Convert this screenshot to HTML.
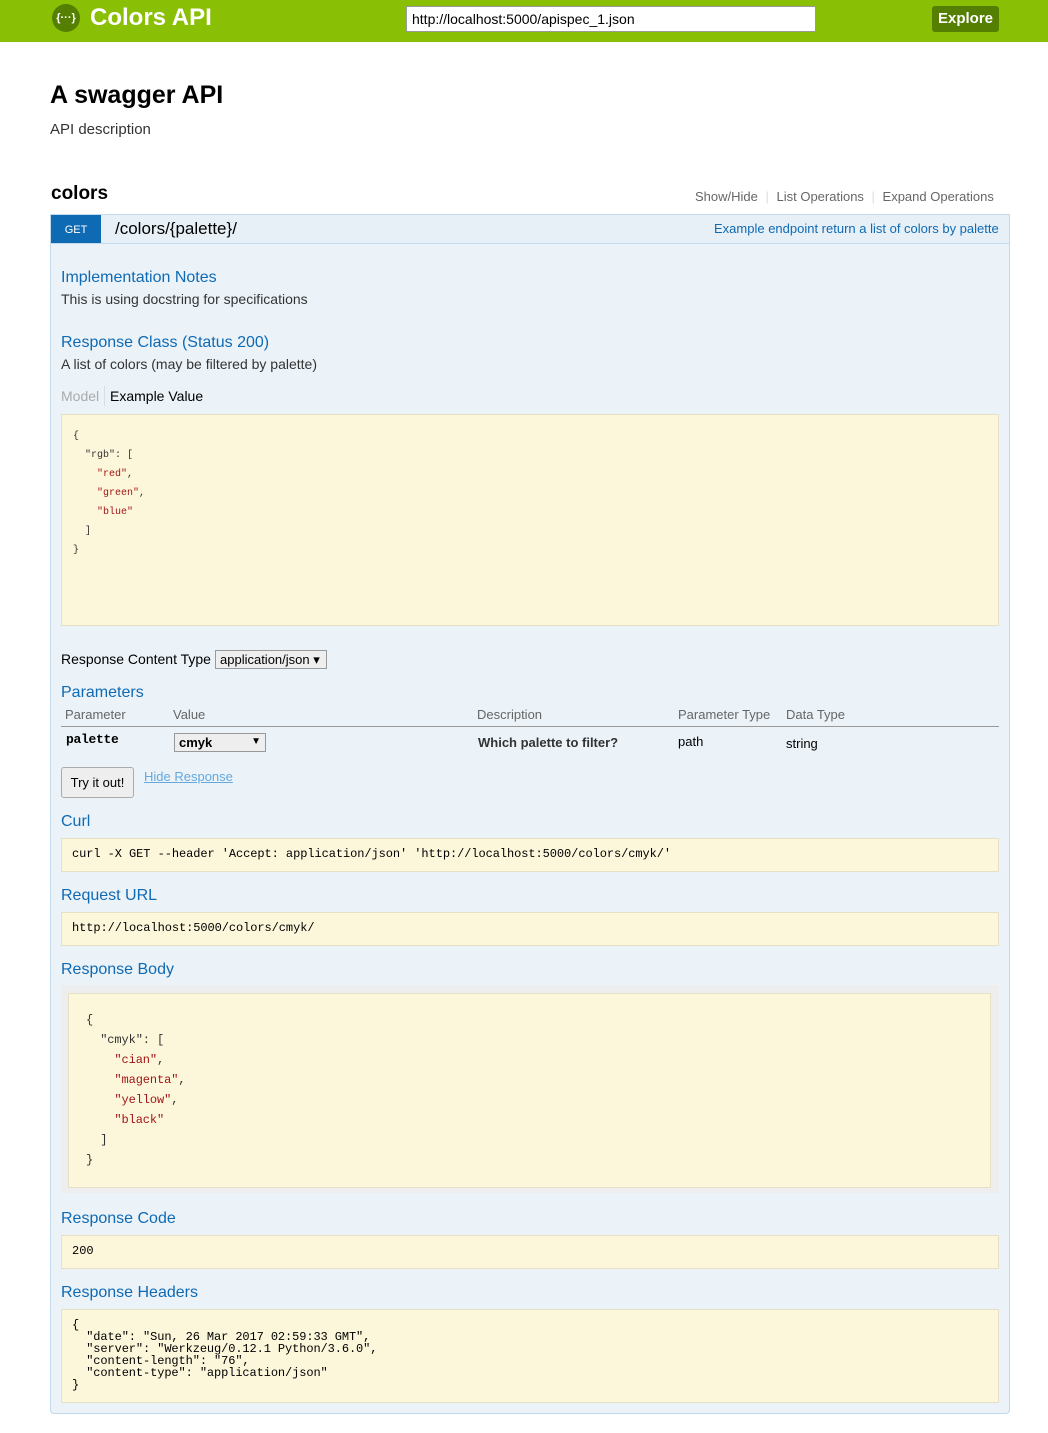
<!DOCTYPE html>
<html><head><meta charset="utf-8"><style>
*{margin:0;padding:0;box-sizing:border-box}
body{width:1048px;height:1433px;background:#fff;font-family:"Liberation Sans",sans-serif;position:relative;overflow:hidden;color:#000}
.a{position:absolute;white-space:nowrap}
.h{color:#0f6ab4;font-size:16px}
.t{font-size:14px;color:#333}
.box{position:absolute;background:#fcf6db;border:1px solid #e5e0c6}
.mono{font-family:"Liberation Mono",monospace}
.s{color:#a31515}
</style></head><body>
<div class="a" style="left:0;top:0;width:1048px;height:42px;background:#89bf04"></div>
<div class="a" style="left:52px;top:4px;width:28px;height:28px;border-radius:50%;background:#547f00;color:#fff;font-size:11px;text-align:center;line-height:28px;font-weight:bold">{···}</div>
<div class="a" style="left:90px;top:4px;font-size:24px;font-weight:bold;color:#fff">Colors API</div>
<div class="a" style="left:406px;top:6px;width:410px;height:26px;background:#fff;border:1px solid #999;font-size:14px;padding:4px 5px">http://localhost:5000/apispec_1.json</div>
<div class="a" style="left:932px;top:6px;width:67px;height:26px;background:#547f00;color:#fff;font-weight:bold;font-size:15px;text-align:center;line-height:26px;border-radius:3px">Explore</div>

<div class="a" style="left:50px;top:81px;font-size:25px;font-weight:bold">A swagger API</div>
<div class="a" style="left:50px;top:121px;font-size:15px;color:#333">API description</div>

<div class="a" style="left:51px;top:183px;font-size:19px;font-weight:bold">colors</div>
<div class="a" style="left:695px;top:189px;font-size:13px;color:#666">Show/Hide <span style="color:#ddd;margin:0 4px">|</span> List Operations <span style="color:#ddd;margin:0 4px">|</span> Expand Operations</div>

<div class="a" style="left:50px;top:214px;width:960px;height:1200px;border:1px solid #c3d9ec;background:#ebf3f9;border-radius:0 0 4px 4px"></div>
<div class="a" style="left:51px;top:215px;width:958px;height:29px;background:#e7f0f7;border-bottom:1px solid #c3d9ec"></div>
<div class="a" style="left:51px;top:215px;width:50px;height:28px;background:#0f6ab4;color:#fff;font-size:11px;text-align:center;line-height:30px">GET</div>
<div class="a" style="left:115px;top:219px;font-size:17px;color:#000">/colors/{palette}/</div>
<div class="a" style="left:714px;top:221px;font-size:13px;color:#0f6ab4">Example endpoint return a list of colors by palette</div>

<div class="a h" style="left:61px;top:269px">Implementation Notes</div>
<div class="a t" style="left:61px;top:291px">This is using docstring for specifications</div>
<div class="a h" style="left:61px;top:334px">Response Class (Status 200)</div>
<div class="a t" style="left:61px;top:356px">A list of colors (may be filtered by palette)</div>
<div class="a" style="left:61px;top:388px;font-size:14px;color:#aaa">Model</div>
<div class="a" style="left:104px;top:386px;height:20px;border-left:1px solid #ddd"></div>
<div class="a" style="left:110px;top:388px;font-size:14px;color:#000">Example Value</div>

<div class="box" style="left:61px;top:414px;width:938px;height:212px"></div>
<div class="a mono" style="left:73px;top:427px;font-size:10px;line-height:19px;color:#333;white-space:pre">{
  "rgb": [
    <span class="s">"red"</span>,
    <span class="s">"green"</span>,
    <span class="s">"blue"</span>
  ]
}</div>

<div class="a" style="left:61px;top:651px;font-size:14px">Response Content Type</div>
<div class="a" style="left:215px;top:650px;width:112px;height:19px;border:1px solid #999;background:#eee;font-size:13px;padding:1px 4px">application/json ▾</div>

<div class="a h" style="left:61px;top:684px">Parameters</div>
<div class="a" style="left:65px;top:707px;font-size:13px;color:#666">Parameter</div>
<div class="a" style="left:173px;top:707px;font-size:13px;color:#666">Value</div>
<div class="a" style="left:477px;top:707px;font-size:13px;color:#666">Description</div>
<div class="a" style="left:678px;top:707px;font-size:13px;color:#666">Parameter Type</div>
<div class="a" style="left:786px;top:707px;font-size:13px;color:#666">Data Type</div>
<div class="a" style="left:61px;top:726px;width:938px;border-top:1px solid #999"></div>
<div class="a mono" style="left:66px;top:732px;font-size:13px;font-weight:bold;letter-spacing:-0.3px">palette</div>
<div class="a" style="left:174px;top:733px;width:92px;height:19px;border:1px solid #999;background:#eee;font-size:13px;font-weight:bold;padding:1px 4px">cmyk<span style="position:absolute;right:4px;font-size:10px;top:2px">▼</span></div>
<div class="a" style="left:478px;top:735px;font-size:13px;font-weight:bold;color:#333">Which palette to filter?</div>
<div class="a" style="left:678px;top:734px;font-size:13px;color:#000">path</div>
<div class="a" style="left:786px;top:736px;font-size:13px;color:#000">string</div>

<div class="a" style="left:61px;top:767px;width:73px;height:31px;border:1px solid #aaa;border-radius:3px;background:#eee;font-size:13px;text-align:center;line-height:30px">Try it out!</div>
<div class="a" style="left:144px;top:769px;font-size:13px;color:#65a8de;text-decoration:underline">Hide Response</div>

<div class="a h" style="left:61px;top:813px">Curl</div>
<div class="box" style="left:61px;top:838px;width:938px;height:34px"></div>
<div class="a mono" style="left:72px;top:847px;font-size:12px;color:#000;letter-spacing:-0.07px">curl -X GET --header 'Accept: application/json' 'http://localhost:5000/colors/cmyk/'</div>

<div class="a h" style="left:61px;top:887px">Request URL</div>
<div class="box" style="left:61px;top:912px;width:938px;height:34px"></div>
<div class="a mono" style="left:72px;top:921px;font-size:12px;letter-spacing:-0.07px">http://localhost:5000/colors/cmyk/</div>

<div class="a h" style="left:61px;top:961px">Response Body</div>
<div class="a" style="left:61px;top:985px;width:938px;height:208px;background:#eee"></div>
<div class="box" style="left:68px;top:993px;width:923px;height:195px"></div>
<div class="a mono" style="left:86px;top:1010px;font-size:12px;line-height:20px;color:#333;white-space:pre;letter-spacing:-0.1px">{
  "cmyk": [
    <span class="s">"cian"</span>,
    <span class="s">"magenta"</span>,
    <span class="s">"yellow"</span>,
    <span class="s">"black"</span>
  ]
}</div>

<div class="a h" style="left:61px;top:1210px">Response Code</div>
<div class="box" style="left:61px;top:1235px;width:938px;height:34px"></div>
<div class="a mono" style="left:72px;top:1244px;font-size:12px">200</div>

<div class="a h" style="left:61px;top:1284px">Response Headers</div>
<div class="box" style="left:61px;top:1309px;width:938px;height:94px"></div>
<div class="a mono" style="left:72px;top:1319px;font-size:12px;line-height:12px;white-space:pre;letter-spacing:-0.1px">{
  "date": "Sun, 26 Mar 2017 02:59:33 GMT",
  "server": "Werkzeug/0.12.1 Python/3.6.0",
  "content-length": "76",
  "content-type": "application/json"
}</div>
</body></html>
